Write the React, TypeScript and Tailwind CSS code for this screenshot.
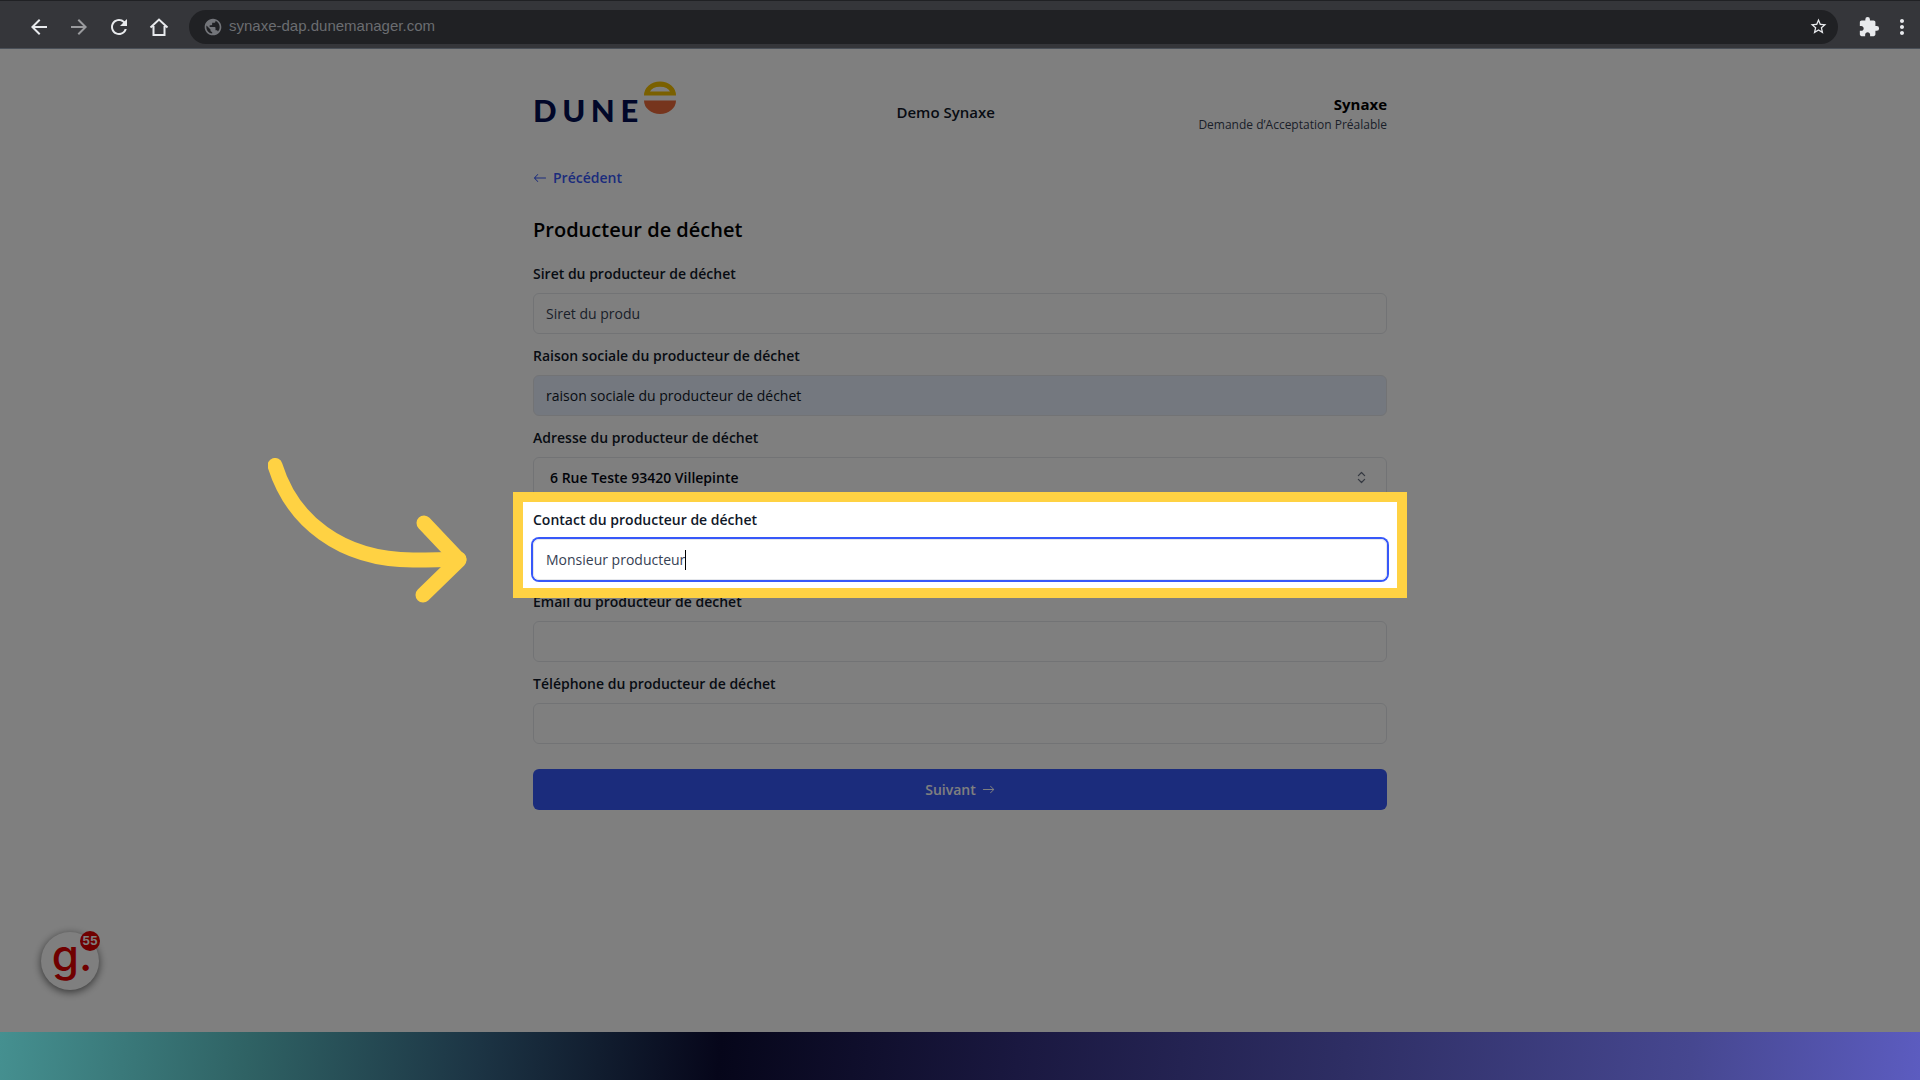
import { ChevronsUpDown } from 'lucide-react';
import { BsArrowLeft, BsArrowRight } from 'react-icons/bs';
import {
  MdArrowBack,
  MdArrowForward,
  MdExtension,
  MdMoreVert,
  MdPublic,
  MdRefresh,
  MdStarOutline,
} from 'react-icons/md';

type Field = {
  id: string;
  label: string;
  value: string;
  kind?: 'select' | 'autofilled' | 'active';
};

const fields: Field[] = [
  { id: 'siret', label: 'Siret du producteur de déchet', value: 'Siret du produ' },
  {
    id: 'raison-sociale',
    label: 'Raison sociale du producteur de déchet',
    value: 'raison sociale du producteur de déchet',
    kind: 'autofilled',
  },
  {
    id: 'adresse',
    label: 'Adresse du producteur de déchet',
    value: '6 Rue Teste 93420 Villepinte',
    kind: 'select',
  },
  {
    id: 'contact',
    label: 'Contact du producteur de déchet',
    value: 'Monsieur producteur',
    kind: 'active',
  },
  { id: 'email', label: 'Email du producteur de déchet', value: '' },
  { id: 'telephone', label: 'Téléphone du producteur de déchet', value: '' },
];

const BrowserBar = () => (
  <header className="flex h-[49px] shrink-0 items-center border-b border-t border-b-[#4a5058] border-t-[#202124] bg-[#35363a] pl-[27px] pr-[6px] pt-1 text-[#e8eaed]">
    <nav className="flex items-center gap-4">
      <button aria-label="Back">
        <MdArrowBack size={24} />
      </button>
      <button aria-label="Forward" className="text-[#9a9b9e]">
        <MdArrowForward size={24} />
      </button>
      <button aria-label="Reload">
        <MdRefresh size={24} />
      </button>
      <button aria-label="Home">
        <svg width="24" height="24" viewBox="0 0 24 24" fill="none" stroke="currentColor" strokeWidth="2">
          <path d="M6.5 11v9h11v-9M3.5 12.5 12 4.5l8.5 8" />
        </svg>
      </button>
    </nav>
    <div className="ml-[18px] flex h-[34px] flex-1 items-center rounded-full bg-[#202124] pl-3.5 pr-2.5">
      <MdPublic size={20} className="text-[#73757a]" />
      <input
        aria-label="Address"
        readOnly
        value="synaxe-dap.dunemanager.com"
        className="ml-1.5 min-w-0 flex-1 bg-transparent font-['Liberation_Sans',Arial,sans-serif] text-[15px] text-[#6b6d71] outline-none"
      />
      <button aria-label="Bookmark">
        <MdStarOutline size={19} />
      </button>
    </div>
    <button aria-label="Extensions" className="ml-5">
      <MdExtension size={22} />
    </button>
    <button aria-label="Menu" className="ml-2.5">
      <MdMoreVert size={24} />
    </button>
  </header>
);

const DuneLogo = () => (
  <div className="flex w-40 items-start self-start">
    <span className="mt-[9px] font-[Lato,sans-serif] text-[31px] font-black leading-10 tracking-[0.18em] text-[#020f52]">
      DUNE
    </span>
    <svg width="32" height="34" viewBox="0 0 32 34">
      <path
        fill="#f5c000"
        fillRule="evenodd"
        d="M0 14.5a16 14 0 0 1 32 0zM6 10.5h20a10.5 7 0 0 0-20 0z"
      />
      <path fill="#ec6a3a" d="M0 19.5h32a16 13.5 0 0 1-32 0z" />
    </svg>
  </div>
);

const FormField = ({ field }: { field: Field }) => {
  const { id, label, value, kind } = field;
  const base = 'h-[41px] w-full rounded-md border border-gray-200 px-3 text-sm outline-none';

  return (
    <div className="relative">
      <label htmlFor={id} className="block text-sm font-semibold leading-5 text-gray-900">
        {label}
      </label>
      <div className="relative mt-[9px]">
        {kind === 'select' && (
          <>
            <select id={id} className={`${base} appearance-none pl-4 font-semibold text-gray-950`}>
              <option>{value}</option>
            </select>
            <ChevronsUpDown
              size={15}
              className="pointer-events-none absolute right-[18px] top-[13px] text-gray-500"
            />
          </>
        )}
        {kind === 'autofilled' && (
          <input id={id} defaultValue={value} className={`${base} bg-[#e8f0fe] text-gray-900`} />
        )}
        {kind === 'active' && (
          <>
            <input id={id} defaultValue={value} className={`${base} text-gray-700 ring-2 ring-[#3758f9]`} />
            <span className="absolute left-[152px] top-[11px] h-5 w-px bg-black" />
          </>
        )}
        {!kind && <input id={id} defaultValue={value} className={`${base} text-gray-700`} />}
      </div>
      {/* spotlight: the spread shadow dims everything outside the frame */}
      {kind === 'active' && (
        <div className="pointer-events-none absolute -inset-x-5 -bottom-[18px] -top-[18px] z-10 border-10 border-[#ffd243] shadow-[0_0_0_4000px_rgba(0,0,0,0.5)]" />
      )}
    </div>
  );
};

const ChatWidget = () => (
  <button
    aria-label="Guide, 55 notifications"
    className="absolute bottom-[42px] left-[41px] size-[58px] rounded-full bg-white pb-3 pl-1 shadow-[0_2px_8px_rgba(0,0,0,0.6)]"
  >
    <span className="block font-[Inter,sans-serif] text-[44px] font-medium leading-10 text-[#e00000]">g.</span>
    <span className="absolute -right-[1px] -top-[1px] flex size-5 items-center justify-center rounded-full bg-[#e00000] font-[Inter,sans-serif] text-[12px] font-bold leading-3 text-white">
      55
    </span>
  </button>
);

const PointerArrow = () => (
  <svg
    className="pointer-events-none absolute -left-[265px] top-[409px] z-20"
    width="200"
    height="146"
    viewBox="0 0 200 146"
    fill="none"
    stroke="#ffd243"
    strokeWidth="15"
    strokeLinecap="round"
    strokeLinejoin="round"
  >
    <path d="M7 7.5C24 62 72 102 145 102q26 0 46-1" />
    <path d="M156 65l35 37-36 35" />
  </svg>
);

const App = () => {
  return (
    <div className="flex min-h-screen flex-col font-['Open_Sans',sans-serif]">
      <BrowserBar />

      <main className="relative flex-1 overflow-hidden bg-white">
        <div className="relative mx-auto max-w-[854px] pt-8">
          <div className="flex h-[62px] items-center justify-between">
            <DuneLogo />
            <p className="text-[15px] font-semibold leading-5 text-gray-900">Demo Synaxe</p>
            <div className="pt-1 text-right">
              <p className="text-[15px] font-bold leading-5 text-black">Synaxe</p>
              <p className="mt-px text-xs leading-5 text-gray-700">Demande d’Acceptation Préalable</p>
            </div>
          </div>

          <a href="#precedent" className="mt-[25px] flex w-fit items-center gap-1.5 text-sm font-semibold leading-5 text-[#3758f9]">
            <BsArrowLeft size={14} />
            Précédent
          </a>

          <h1 className="mt-7 text-xl font-semibold leading-7 text-black">Producteur de déchet</h1>

          <form className="mt-5" onSubmit={e => e.preventDefault()}>
            <div className="space-y-3">
              {fields.map(field => (
                <FormField key={field.id} field={field} />
              ))}
            </div>
            <button
              type="submit"
              className="mt-[25px] flex h-[41px] w-full items-center justify-center gap-1.5 rounded-md bg-[#3758f9] text-sm font-semibold text-white"
            >
              Suivant
              <BsArrowRight size={13} />
            </button>
          </form>

          <PointerArrow />
        </div>
        <ChatWidget />
      </main>

      <div className="h-12 shrink-0 bg-[linear-gradient(95deg,#459090_0%,#2f6264_13%,#1c3444_25%,#06061a_37.5%,#1a1840_53%,#2e2e64_70%,#464790_88%,#5c5cc0_100%)]" />
    </div>
  );
};

export default App;
